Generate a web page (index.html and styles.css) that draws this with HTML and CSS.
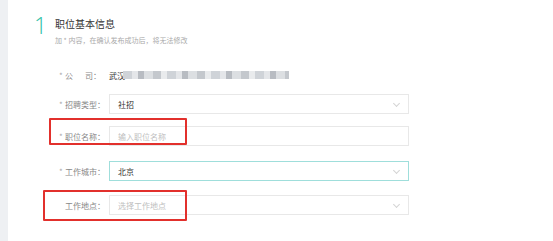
FILE: index.html
```html
<!DOCTYPE html>
<html lang="zh-CN">
<head>
    <meta charset="UTF-8">
    <meta name="viewport" content="width=device-width, initial-scale=1.0">
    <title>发布职位</title>
    <link rel="stylesheet" href="styles.css">
</head>
<body>
    <div class="page">
        <aside class="rail"></aside>

        <main class="content">
            <section class="step">
                <div class="step-head">
                    <span class="step-num">1</span>
                    <div class="step-text">
                        <h2 class="step-title">职位基本信息</h2>
                        <p class="step-tip">加 * 内容，在确认发布成功后，将无法修改</p>
                    </div>
                </div>

                <div class="form">
                    <div class="row row-company">
                        <label class="label"><i class="req">*</i>公<span class="gap"></span>司：</label>
                        <div class="value">武汉<span class="masked"></span></div>
                    </div>

                    <div class="row row-type">
                        <label class="label"><i class="req">*</i>招聘类型：</label>
                        <div class="field select">
                            <span class="text">社招</span>
                            <span class="arrow"></span>
                        </div>
                    </div>

                    <div class="row row-name">
                        <label class="label"><i class="req">*</i>职位名称：</label>
                        <div class="field">
                            <span class="placeholder">输入职位名称</span>
                        </div>
                        <span class="mark mark-name"></span>
                    </div>

                    <div class="row row-city">
                        <label class="label"><i class="req">*</i>工作城市：</label>
                        <div class="field select focused">
                            <span class="text">北京</span>
                            <span class="arrow"></span>
                        </div>
                    </div>

                    <div class="row row-place">
                        <label class="label"><i class="req off">*</i>工作地点：</label>
                        <div class="field select">
                            <span class="placeholder">选择工作地点</span>
                            <span class="arrow"></span>
                        </div>
                        <span class="mark mark-place"></span>
                    </div>
                </div>
            </section>

            <section class="step">
                <div class="step-head">
                    <span class="step-num">2</span>
                </div>
            </section>
        </main>
    </div>
</body>
</html>
```

FILE: styles.css
```css
body {
    margin: 0;
    background: #fff;
    font-family: "Noto Sans CJK SC", "Noto Sans", sans-serif;
    color: #333;
}
.page {
    display: flex;
    min-height: 241px;
    overflow: hidden;
}
.rail {
    width: 8px;
    flex: none;
    background: #eef0f3;
}
.content {
    flex: 1;
    padding: 13px 0 0 26px;
}

/* step header */
.step-head {
    display: flex;
    align-items: flex-start;
}
.step-num {
    width: 21px;
    font-family: "Open Sans", "Liberation Sans", sans-serif;
    font-weight: 300;
    font-size: 23px;
    line-height: 24px;
    color: #2fc0a5;
}
.step-title {
    margin: 4px 0 0;
    font-size: 10px;
    font-weight: normal;
    line-height: 14px;
    color: #333;
}
.step-tip {
    margin: 4px 0 0;
    font-size: 7px;
    line-height: 10px;
    color: #aaa;
}

/* form rows */
.form {
    padding: 20px 0 0 25px;
}
.row {
    position: relative;
    display: flex;
    align-items: center;
    height: 20px;
    font-size: 8px;
}
.row-type { margin-top: 9px; }
.row-name { margin-top: 12px; }
.row-city { margin-top: 15px; }
.row-place { margin-top: 14px; }

.label {
    width: 50px;
    flex: none;
    color: #888;
    white-space: nowrap;
}
.req {
    display: inline-block;
    width: 6px;
    font-style: normal;
    color: #aaa;
}
.req.off { visibility: hidden; }
.gap {
    display: inline-block;
    width: 12px;
}

.value {
    display: flex;
    align-items: center;
    color: #333;
}
.masked {
    display: inline-block;
    width: 166px;
    height: 8px;
    margin-left: -2px;
    background: repeating-linear-gradient(90deg,
        #cfd3d8 0 9px, #e4e6e9 9px 15px, #b8bcc2 15px 21px,
        #dcdfe2 21px 30px, #c4c8cd 30px 38px, #e9ebed 38px 44px);
    filter: blur(0.6px);
}

.field {
    position: relative;
    display: flex;
    align-items: center;
    width: 300px;
    height: 20px;
    box-sizing: border-box;
    padding: 0 8px;
    border: 1px solid #e8e8e8;
    background: #fff;
}
.field.focused {
    border-color: #9fdedb;
}
.text { color: #333; }
.placeholder { color: #c0c0c0; }

.arrow {
    position: absolute;
    right: 9px;
    top: 6px;
    width: 4px;
    height: 4px;
    border-right: 1px solid #d4d4d4;
    border-bottom: 1px solid #d4d4d4;
    transform: rotate(45deg);
}

/* red annotation boxes drawn over the form */
.mark {
    position: absolute;
    border: 2px solid #e2302c;
    border-radius: 1px;
    pointer-events: none;
}
.mark-name {
    left: -10px;
    top: -8px;
    width: 134px;
    height: 23px;
}
.mark-place {
    left: -16px;
    top: -5px;
    width: 140px;
    height: 27px;
}

.step + .step {
    margin-top: 22px;
}
```
